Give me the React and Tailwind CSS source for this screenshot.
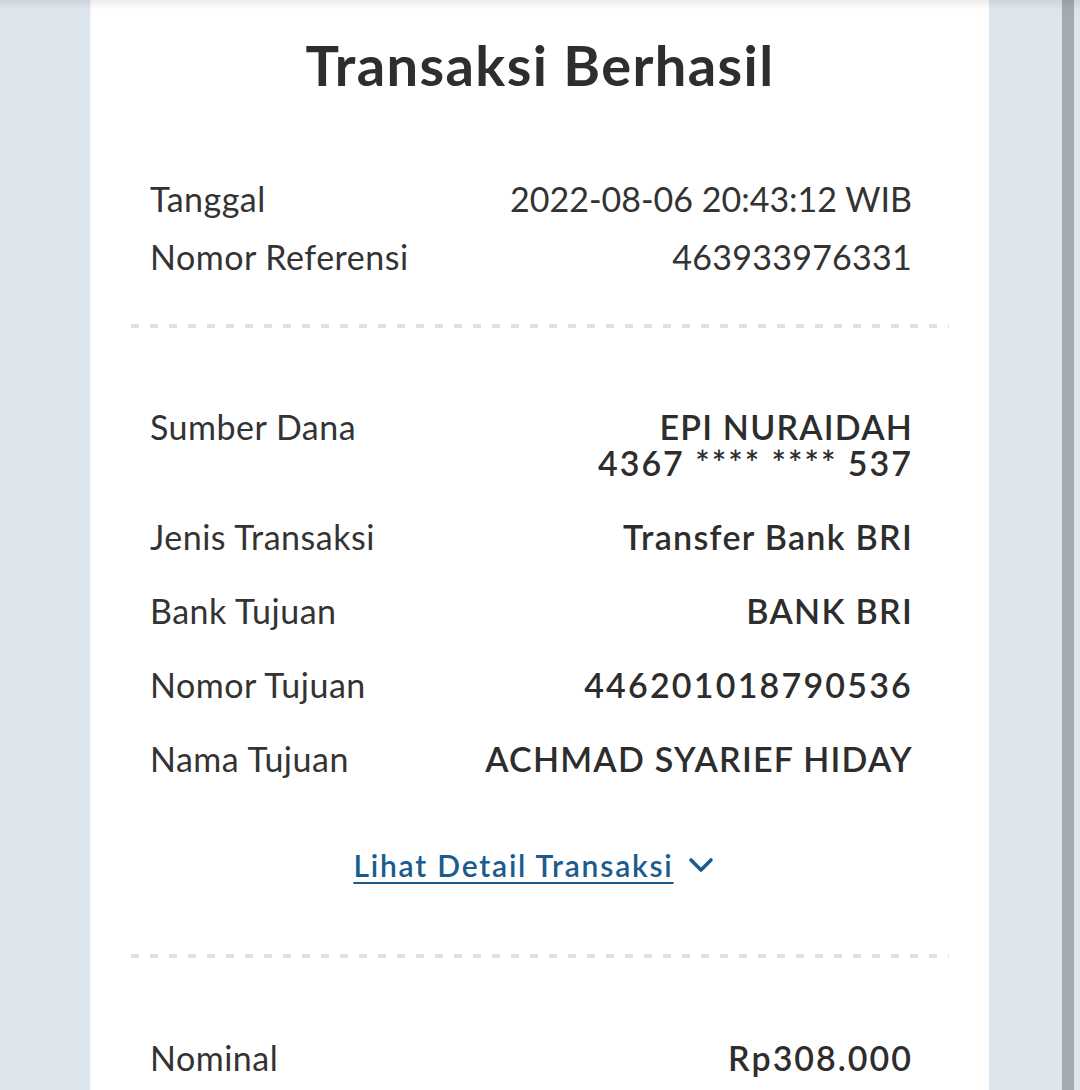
import React from "react";

function Dash({ className = "" }) {
  return (
    <div
      className={
        "h-[4px] mx-[40px] bg-[repeating-linear-gradient(90deg,#dbe3e3_0px,#dbe3e3_8px,transparent_8px,transparent_19px)] " +
        className
      }
    />
  );
}

function Row({ label, children, className = "", vClass = "tracking-[1.3px]" }) {
  return (
    <div className={"flex justify-between items-start " + className}>
      <div className="text-[34px] leading-[36px] tracking-[0.5px] text-[#333333]">{label}</div>
      <div className={"text-[34px] leading-[36px] text-[#2d2d2d] font-semibold text-right " + vClass}>
        {children}
      </div>
    </div>
  );
}

export default function App() {
  return (
    <div
      className="relative w-[1080px] h-[1090px] overflow-hidden flex bg-[#dde5ed]"
      style={{ fontFamily: "Lato, 'Noto Sans', sans-serif" }}
    >
      <div className="w-[90px] shrink-0" />
      <div className="w-[899px] shrink-0 bg-white border-l border-[#f3f6f8]">
        <h1 className="pt-[33px] text-center text-[56px] leading-[64px] font-bold tracking-[1.4px] text-[#2e2e2e]">
          Transaksi Berhasil
        </h1>

        <div className="pl-[59px] pr-[77px] mt-[84px]">
          <div className="flex justify-between">
            <div className="text-[34px] leading-[36px] tracking-[0.5px] text-[#333333]">Tanggal</div>
            <div className="text-[34px] leading-[36px] text-[#333333]">2022-08-06 20:43:12 WIB</div>
          </div>
          <div className="flex justify-between mt-[22px]">
            <div className="text-[34px] leading-[36px] tracking-[0.5px] text-[#333333]">Nomor Referensi</div>
            <div className="text-[34px] leading-[36px] tracking-[0.25px] text-[#333333]">463933976331</div>
          </div>
        </div>

        <Dash className="mt-[49px]" />

        <div className="pl-[59px] pr-[76px] mt-[81px]">
          <Row label="Sumber Dana" vClass="">
            <div className="tracking-[1.2px]">EPI NURAIDAH</div>
            <div className="tracking-[2px]">4367 **** **** 537</div>
          </Row>
          <Row label="Jenis Transaksi" className="mt-[38px]">
            Transfer Bank BRI
          </Row>
          <Row label="Bank Tujuan" className="mt-[38px]">
            BANK BRI
          </Row>
          <Row label="Nomor Tujuan" className="mt-[38px]" vClass="tracking-[2.2px]">
            446201018790536
          </Row>
          <Row label="Nama Tujuan" className="mt-[38px]" vClass="tracking-[1.25px]">
            ACHMAD SYARIEF HIDAY
          </Row>

          <div className="mt-[70px] flex justify-center items-center gap-[14px] pl-[4px]">
            <span className="text-[30px] leading-[36px] font-semibold tracking-[1.8px] text-[#1a5c8e] underline underline-offset-[5px] decoration-[2px]">
              Lihat Detail Transaksi
            </span>
            <svg width="26" height="18" viewBox="0 0 26 18" fill="none">
              <path
                d="M3 4 L13 14 L23 4"
                stroke="#1a5c8e"
                strokeWidth="3.6"
                strokeLinecap="round"
                strokeLinejoin="round"
              />
            </svg>
          </div>
        </div>

        <Dash className="mt-[71px]" />

        <div className="pl-[59px] pr-[76px] mt-[82px]">
          <Row label="Nominal" vClass="tracking-[2px]">Rp308.000</Row>
        </div>
      </div>
      <div className="w-[73px] shrink-0" />
      <div className="w-[12px] shrink-0 bg-[#a5a9b1]" />
      <div className="flex-1" />
      <div className="absolute top-0 left-0 right-0 h-[10px] bg-gradient-to-b from-black/[0.07] to-transparent" />
    </div>
  );
}
